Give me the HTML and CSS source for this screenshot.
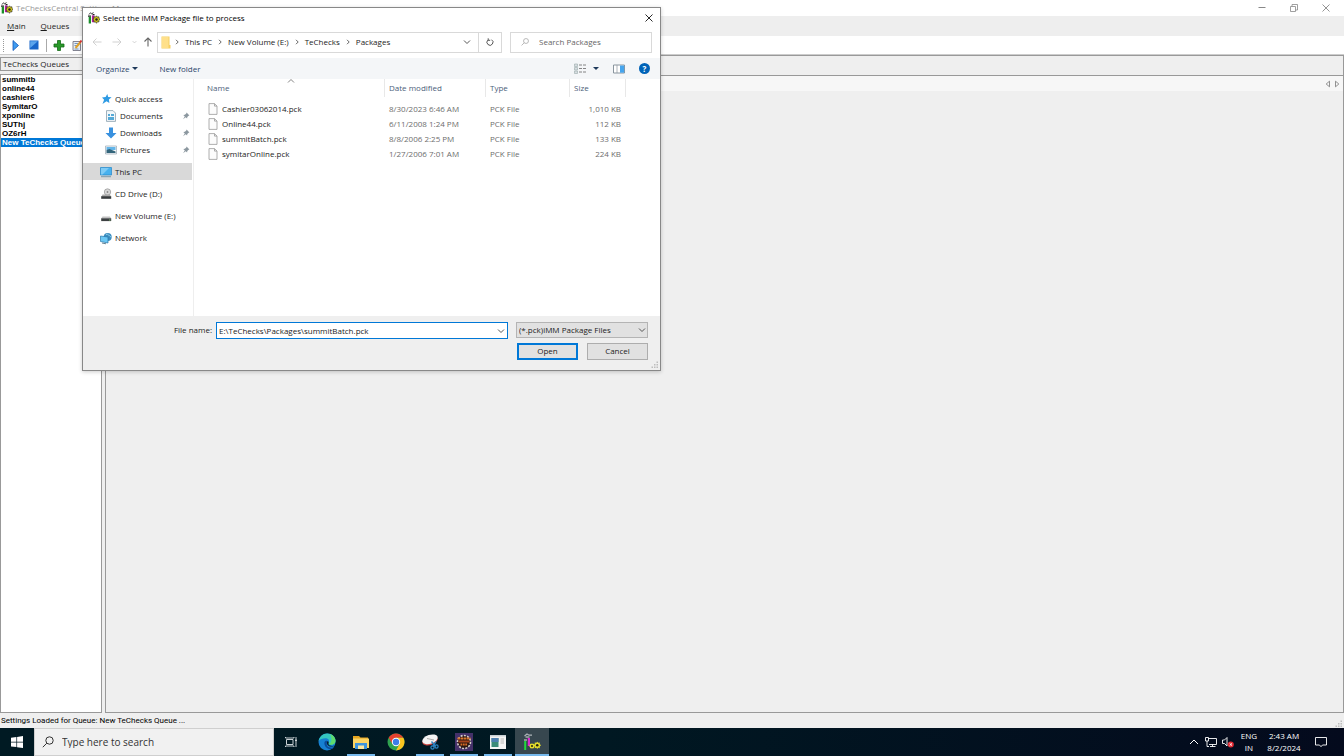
FILE: index.html
```html
<!DOCTYPE html>
<html lang="en">
<head>
<meta charset="utf-8">
<title>TeChecksCentral Settings Manager</title>
<link rel="stylesheet" href="styles.css">
</head>
<body>
<svg class="defs" aria-hidden="true">
  <symbol id="app" viewBox="0 0 12 12">
    <path d="M1 2.500 2.500.8l1.200 1L5.500.6" fill="none" stroke="#333" stroke-width="1"/>
    <path d="M0 3.500h3v1.300H0zM4.500 2h2v1.300h-2z" fill="#222"/>
    <path d="M.7 4.800h2.300v6.700H.7z" fill="#1a8f2a"/>
    <path d="M3.900 3.400h2.500v6.800H3.900z" fill="#b51d9d"/>
    <path d="m8.500 3.800.9 1.300 1.600-.3-.1 1.500 1.100 1-1.100 1 .1 1.600-1.600-.1-.9 1.500-1-1.400-1.700.2.200-1.700-1.200-1.100 1.200-1-.2-1.600 1.700.3z" fill="#cfc318" stroke="#222" stroke-width=".6"/>
    <circle cx="8.500" cy="7.500" r="1.200" fill="#222"/>
  </symbol>
  <symbol id="gear" viewBox="0 0 6 6"><path d="m3 0 .7 1 1.300-.3v1.300l1 1-1 1v1.300L3.700 5 3 6l-.7-1-1.300.3V4L0 3l1-1V.7l1.300.3z" fill="#e4dc2a"/><circle cx="3" cy="3" r="1" fill="#24240f"/></symbol>
  <symbol id="file" viewBox="0 0 10 12"><path d="M1 .6h5.500l2.500 2.500v8.300H1z" fill="#fcfcfc" stroke="#9a9a9a" stroke-width=".8"/><path d="M6.500.6v2.500H9" fill="none" stroke="#9a9a9a" stroke-width=".8"/></symbol>
  <symbol id="pin" viewBox="0 0 8 8"><path d="M4.600.6 7.400 3.400l-.8.3-1.300 1.400-.2 1.500L3.700 5.300 1 7.200l1.800-2.800L1.300 3l1.600-.2L4.300 1.400z" fill="#8b979f"/></symbol>
  <symbol id="chev" viewBox="0 0 8 8"><path d="m1 2.500 3 3 3-3" fill="none" stroke="currentColor" stroke-width="1"/></symbol>
  <symbol id="sep" viewBox="0 0 6 8"><path d="m2 1.800 2.200 2.200L2 6.200" fill="none" stroke="#555" stroke-width=".9"/></symbol>
  <symbol id="lens" viewBox="0 0 12 12"><circle cx="7.500" cy="4.500" r="3.700" fill="none" stroke="currentColor"/><path d="M4.800 7.200.8 11.200" stroke="currentColor"/></symbol>
  <symbol id="grip" viewBox="0 0 8 8"><path d="M5.500.5h1.500V2H5.500zM3 3h1.500v1.500H3zM5.500 3H7v1.500H5.500zM.5 5.500H2V7H.5zM3 5.500h1.500V7H3zM5.500 5.500H7V7H5.500z" fill="#bdbdbd"/></symbol>
</svg>

<div class="desktop">
  <header class="titlebar">
    <svg class="i12"><use href="#app"/></svg>
    <span class="titlebar-text">TeChecksCentral Settings Manager</span>
    <div class="window-controls">
      <button aria-label="Minimize"><svg viewBox="0 0 8 8"><path d="M.5 3.500h7" stroke="#888" fill="none"/></svg></button>
      <button aria-label="Restore"><svg viewBox="0 0 8 8"><path d="M.5 2.500h5v5h-5zM2 2.500V.5h5.500V6h-2" stroke="#888" stroke-width=".8" fill="none"/></svg></button>
      <button aria-label="Close"><svg viewBox="0 0 8 8"><path d="m.5.5 7 7m0-7-7 7" stroke="#888" stroke-width=".9" fill="none"/></svg></button>
    </div>
  </header>
  <nav class="menubar">
    <button><u>M</u>ain</button>
    <button><u>Q</u>ueues</button>
  </nav>
  <div class="toolbar">
    <span class="handle"></span>
    <button aria-label="Start"><svg viewBox="0 0 12 12"><path d="M3 1.500 8.500 6.500 3 11.500z" fill="#3f9cf0" stroke="#1557b8" stroke-width=".8"/></svg></button>
    <button aria-label="Stop"><svg viewBox="0 0 12 12"><path d="M1.500 1.500h9v9h-9z" fill="#1765c9"/><path d="M2.200 2.200h7.600L2.200 9z" fill="#5aa4ec"/></svg></button>
    <span class="divider"></span>
    <button aria-label="Add"><svg viewBox="0 0 12 12"><path d="M4.500 1.500h3v3.500H11v3H7.500v3.500h-3V8H1V5h3.500z" fill="#2a9a2a" stroke="#156a18" stroke-width=".8"/></svg></button>
    <button aria-label="Edit"><svg viewBox="0 0 12 12"><path d="M2 2.500h7.500v9H2z" fill="#e8eef5" stroke="#667" stroke-width=".8"/><path d="M3.500 4.500h4M3.500 6.500h3M3.500 10h4" stroke="#557fb5" stroke-width=".8"/><path d="m4.500 9 5-6" stroke="#dfa22b" stroke-width="2"/><path d="m9 3.500 1.500-2" stroke="#d33" stroke-width="2"/></svg></button>
  </div>
  <main class="workspace">
    <section class="queues">
      <h2 class="queues-title">TeChecks Queues</h2>
      <ul class="queue-list">
        <li>summitb</li><li>online44</li><li>cashier6</li><li>SymitarO</li><li>xponline</li><li>SUThj</li><li>OZ6rH</li>
        <li class="selected">New TeChecks Queue</li>
      </ul>
    </section>
    <section class="settings">
      <div class="settings-head"></div>
      <div class="settings-pane">
        <div class="tabstrip">
          <button aria-label="Previous tab"><svg viewBox="0 0 6 8"><path d="M4.500 1.200v5.600L1.200 4z" fill="none" stroke="#777" stroke-width=".8"/></svg></button>
          <button aria-label="Next tab"><svg viewBox="0 0 6 8"><path d="M1.500 1.200v5.600L4.800 4z" fill="none" stroke="#777" stroke-width=".8"/></svg></button>
        </div>
      </div>
    </section>
  </main>
  <footer class="statusbar"><span>Settings Loaded for Queue: New TeChecks Queue ...</span><svg class="grip"><use href="#grip"/></svg></footer>

  <div class="taskbar">
    <button class="start" aria-label="Start menu"><svg viewBox="0 0 12 12"><path d="M0 1.700 5.400 1v4.700H0zM6.100.9 12 0v5.700H6.100zM0 6.400h5.400v4.700L0 10.400zM6.100 6.400H12V12l-5.900-.8z" fill="#fff"/></svg></button>
    <label class="task-search"><svg class="i12"><use href="#lens"/></svg><input type="text" placeholder="Type here to search" aria-label="Type here to search"></label>
    <button class="task taskview" aria-label="Task View"><svg class="i12" viewBox="0 0 12 12"><path d="M1.500 3.500h6.500v5H1.500zM.5 1v1h8.500V1M.5 11v-1h8.500v1M11 1v2.500M11 6v5" fill="none" stroke="#dfe5e8" stroke-width=".9"/><path d="M10.200 3.500h1.600v2h-1.600z" fill="#fff"/></svg></button>
    <button class="task" aria-label="Edge"><svg viewBox="0 0 18 18"><circle cx="9" cy="9" r="8.500" fill="#1680d2"/><path d="M.6 8C1.500 3.500 5 .5 9.300.5c5 0 8.200 3.600 8.200 7.200 0 2.600-2 4-4.200 4-2.300 0-3.300-.9-2.800-1.700C12 7.500 10.500 5.200 7.500 5.200 4.500 5.200 2 6 .6 8z" fill="#35c6c0"/><path d="M12 1c3.600 1.500 5.500 4 5.500 6.700 0 2.600-2 4-4.200 4-1 0-2-.2-2.500-.7 3-1 3.700-5.500 1.200-10z" fill="#5fdc6c"/><path d="M6.500 9c-.8 4 2.500 7.500 6.800 7 1.200-.2 2.200-.9 3-1.700-5 1.300-8.300-.8-7.500-4.300.2-1 1-1.500 1-1.500S8 6.500 6.500 9z" fill="#0b4c9c"/><path d="M9.200 8.800c-.8 1.700 0 4 2.600 4.600 2 .5 4-.1 5-.9-1 .5-2.500.6-3.800.3-2-.4-3-1.700-2.400-2.900.3-.7-.6-2.300-1.400-1.100z" fill="#06202b"/></svg></button>
    <button class="task open" aria-label="File Explorer"><svg viewBox="0 0 18 18"><path d="M1 3h6l1.500 1.500H16V15H1z" fill="#e5a520"/><path d="M1 5.500h16V15H1z" fill="#fbd464"/><path d="M3 10h12v6H3z" fill="#3e93dc"/><path d="M6 12.500h6V16H6z" fill="#fbe6a0"/></svg></button>
    <button class="task chrome" aria-label="Chrome"><svg viewBox="0 0 18 18"><circle cx="9" cy="9" r="8.500" fill="#2fa24f"/><path d="M1.640 4.750A8.500 8.500 0 0 1 16.360 4.750H9L5.400 11z" fill="#e5402f"/><path d="M16.360 4.750A8.500 8.500 0 0 1 9 17.500L12.600 11 9 4.750z" fill="#fbc41f"/><circle cx="9" cy="9" r="4.200" fill="#fff"/><circle cx="9" cy="9" r="3.200" fill="#3b7de8"/></svg></button>
    <button class="task open" aria-label="Snipping Tool"><svg viewBox="0 0 18 18"><ellipse cx="9" cy="7.500" rx="8" ry="4.600" transform="rotate(-18 9 7.500)" fill="#c8413c"/><ellipse cx="9" cy="6.300" rx="8" ry="4.400" transform="rotate(-18 9 6.300)" fill="#f3f3f3"/><path d="m6 5.500 7 1.500" stroke="#aaa" stroke-width="1"/><path d="m10.500 8.500 4 5m.5-5-3 5" stroke="#2d86c6" stroke-width="1.400"/><circle cx="11.500" cy="14.500" r="1.600" fill="none" stroke="#2d86c6" stroke-width="1.200"/><circle cx="15.500" cy="13.500" r="1.600" fill="none" stroke="#2d86c6" stroke-width="1.200"/></svg></button>
    <button class="task open" aria-label="Java IDE"><svg viewBox="0 0 18 18"><path d="M0 0h18v18H0z" fill="#44316a"/><circle cx="9" cy="9" r="6.500" fill="#2a1712" stroke="#d5cfca" stroke-width="1.600" stroke-dasharray="2 1.300"/><path d="M2.500 5.500h13" stroke="#d9772d" stroke-width="2.200" stroke-dasharray="2.500 .5"/><path d="M3.500 8.500h11" stroke="#a8441b" stroke-width="2"/><path d="M5.500 11.500h7" stroke="#d96d25" stroke-width="2" stroke-dasharray="1.800 .6"/></svg></button>
    <button class="task open" aria-label="Window"><svg viewBox="0 0 18 18"><path d="M1 2h16v14H1z" fill="#f4f4f4"/><path d="M1 2h16v1.500H1z" fill="#c8d0d5"/><path d="M2.500 5h7v9h-7z" fill="#3b8b78"/><path d="M2.500 5h7v4h-7z" fill="#4c7fb0"/><path d="M11.500 6H15M11.500 8H15M11.500 10H15" stroke="#aaa" stroke-width=".8"/></svg></button>
    <button class="task open active" aria-label="TeChecks"><svg viewBox="0 0 18 18"><path d="M1.500 3 4 1l2 1.200h3" stroke="#aeb6ba" stroke-width="1.200" fill="none"/><path d="M2.500 4h4M1 7h3" stroke="#ddd" stroke-width="1"/><path d="M1.200 8h2v9h-2z" fill="#20d93c"/><path d="M4.800 5h2.200v8H4.800z" fill="#dc27cf"/><use href="#gear" x="6" y="10" width="6" height="6"/><use href="#gear" x="10.500" y="8.500" width="7.500" height="7.500"/></svg></button>
    <div class="tray">
      <button aria-label="Show hidden icons"><svg class="i12" viewBox="0 0 12 12"><path d="m2 8 4-4 4 4" fill="none" stroke="#fff"/></svg></button>
      <button aria-label="Network"><svg class="i12" viewBox="0 0 12 12"><path d="M3 2.500h8.500V8.500H4M7.500 8.500v2M5 10.500h5.500M2 5v5.500h2M.5 1.500h3v3.500h-3z" fill="none" stroke="#fff" stroke-width=".9"/></svg></button>
      <button aria-label="Volume muted"><svg class="i12" viewBox="0 0 12 12"><path d="M.5 4h2L5 1.500v8.500L2.500 7.500h-2z" fill="none" stroke="#fff" stroke-width=".9"/><circle cx="8.800" cy="8.500" r="3" fill="#e32b35"/><path d="m7.600 7.300 2.400 2.400m0-2.400L7.600 9.700" stroke="#fff" stroke-width=".9"/></svg></button>
      <button class="lang"><span>ENG</span><span>IN</span></button>
      <button class="clock"><span>2:43 AM</span><span>8/2/2024</span></button>
      <button class="notice" aria-label="Notifications"><svg class="i12" viewBox="0 0 12 12"><path d="M.5 1.500h11v7.500H7.500L6 10.700 4.500 9h-4z" fill="none" stroke="#fff" stroke-width=".9"/></svg></button>
    </div>
  </div>

  <div class="dialog" role="dialog" aria-labelledby="dialog-title">
    <div class="dialog-title">
      <svg class="i12"><use href="#app"/></svg>
      <span id="dialog-title">Select the iMM Package file to process</span>
      <button aria-label="Close dialog"><svg viewBox="0 0 8 8"><path d="m.5.5 7 7m0-7-7 7" stroke="#111" stroke-width=".9"/></svg></button>
    </div>
    <div class="address-row">
      <div class="arrows">
        <button aria-label="Back"><svg viewBox="0 0 10 10"><path d="M9.500 5H1m3.500-3.500L1 5l3.500 3.500" fill="none" stroke="#ccc" stroke-width=".9"/></svg></button>
        <button aria-label="Forward"><svg viewBox="0 0 10 10"><path d="M.5 5H9M5.500 1.500 9 5 5.500 8.500" fill="none" stroke="#ccc" stroke-width=".9"/></svg></button>
        <button class="small light" aria-label="Recent"><svg><use href="#chev"/></svg></button>
        <button aria-label="Up"><svg viewBox="0 0 10 10"><path d="M5 9.500V1.200M1.500 4.500 5 1l3.500 3.500" fill="none" stroke="#666" stroke-width="1.100"/></svg></button>
      </div>
      <div class="address">
        <svg class="folder" viewBox="0 0 10 13"><path d="M.5.5h8V9h1v3.500h-9z" fill="#f6cf62"/><path d="M1 1h6.500v11H1z" fill="#ffe08a"/></svg>
        <svg class="sep"><use href="#sep"/></svg><button>This PC</button>
        <svg class="sep"><use href="#sep"/></svg><button>New Volume (E:)</button>
        <svg class="sep"><use href="#sep"/></svg><button>TeChecks</button>
        <svg class="sep"><use href="#sep"/></svg><button>Packages</button>
        <button class="history" aria-label="Previous locations"><svg><use href="#chev"/></svg></button>
        <button class="refresh" aria-label="Refresh"><svg viewBox="0 0 8 8"><path d="M5.500 1.700A3 3 0 1 1 2 2M2.200 .3V2.300H4.200" fill="none" stroke="#444" stroke-width=".9"/></svg></button>
      </div>
      <label class="search"><svg><use href="#lens"/></svg><input type="text" placeholder="Search Packages" aria-label="Search Packages"></label>
    </div>
    <div class="commands">
      <button class="organize">Organize <i class="caret"></i></button>
      <button>New folder</button>
      <div class="view-tools">
        <button aria-label="Change view"><svg class="i12" viewBox="0 0 12 12"><path d="M.5 1h3v2.500h-3zM.5 4.500h3V7h-3zM.5 8h3v2.500h-3z" fill="#d7dde2" stroke="#9aa" stroke-width=".6"/><path d="M5 2h3m1 0h3M5 5.500h3m1 0h3M5 9h3m1 0h3" stroke="#777" stroke-width=".9"/></svg><i class="caret"></i></button>
        <button aria-label="Preview pane"><svg class="i12" viewBox="0 0 12 12"><path d="M.5 2h11v8H.5z" fill="#fff" stroke="#7d8a94" stroke-width=".9"/><path d="M7 2.500h4.200v7.200H7z" fill="#45a5ee"/><path d="M4 2v8" stroke="#8a949c" stroke-width=".7"/></svg></button>
        <button class="help" aria-label="Help">?</button>
      </div>
    </div>
    <div class="browser">
      <nav class="places">
        <a href="#" class="group"><svg class="i12" viewBox="0 0 12 12"><path d="m7.300 1 .9 3 3.400.3-2.700 2.200.5 3.400-2.900-1.600-4 2.700 1.600-4.200L2 4.600l3.600-.5z" fill="#2e9be4"/></svg>Quick access</a>
        <a href="#" class="sub"><svg class="i12" viewBox="0 0 12 12"><path d="M1.500.6H8l2.500 2.500v8.300h-9z" fill="#f2f7fa" stroke="#8aa0ad" stroke-width=".8"/><path d="M3 4h2v2H3zM6 4h3v2H6zM3 7h6v3H3z" fill="#55a9d6"/></svg>Documents<svg class="pin"><use href="#pin"/></svg></a>
        <a href="#" class="sub"><svg class="i12" viewBox="0 0 12 12"><path d="M4 .6h4V6h3.500L6 11.500.5 6H4z" fill="#3891df"/></svg>Downloads<svg class="pin"><use href="#pin"/></svg></a>
        <a href="#" class="sub"><svg class="i12" viewBox="0 0 12 12"><path d="M.5 2h11v8H.5z" fill="#f5f8fa" stroke="#9aa8b1" stroke-width=".7"/><path d="M1.500 3h9v3h-9z" fill="#63b5e9"/><path d="M1.500 9V6l3-1 6 2.500V9z" fill="#33657b"/></svg>Pictures<svg class="pin"><use href="#pin"/></svg></a>
        <a href="#" class="place current"><svg class="i12" viewBox="0 0 12 12"><path d="M.5 1.500h11v7.500H.5z" fill="#48b1ee" stroke="#2387c9" stroke-width=".7"/><path d="M1 2h8L2.500 8.600H1z" fill="#7fcbf5"/><path d="M1 10.700h10" stroke="#7d98a8"/></svg>This PC</a>
        <a href="#" class="place"><svg class="i12" viewBox="0 0 12 12"><circle cx="7.500" cy="4" r="3.200" fill="#d8d8d8" stroke="#929292" stroke-width=".7"/><circle cx="7.500" cy="4" r=".9" fill="#888"/><path d="m2.500 6.500-1 2h9.500l-1-2z" fill="#aaa"/><path d="M1.200 8.200h10v2.600h-10z" fill="#373b3d"/></svg>CD Drive (D:)</a>
        <a href="#" class="place"><svg class="i12" viewBox="0 0 12 12"><path d="m2.500 6.500-1.300 2h10l-1.300-2z" fill="#c1c1c1"/><path d="M1.200 8.300h10v2.800h-10z" fill="#3c4042"/><path d="M9 10h1.500" stroke="#8bdc78" stroke-width=".8"/></svg>New Volume (E:)</a>
        <a href="#" class="place"><svg class="i12" viewBox="0 0 12 12"><circle cx="7.700" cy="5" r="4" fill="#3c8ec0"/><path d="M6 2.500C8.500 1.500 9 4 11 5" stroke="#8ccbe8" fill="none"/><path d="m.5 4 7.500 1v6l-7.500-1.500z" fill="#6cc8f4" stroke="#2677aa" stroke-width=".7"/><path d="m2 11 4 .8" stroke="#648394"/></svg>Network</a>
      </nav>
      <div class="files">
        <table>
          <colgroup><col class="c-name"><col class="c-date"><col class="c-type"><col class="c-size"></colgroup>
          <thead><tr><th class="sorted">Name<svg viewBox="0 0 8 8"><path d="m1 5.500 3-3 3 3" fill="none" stroke="#777" stroke-width=".9"/></svg></th><th>Date modified</th><th>Type</th><th>Size</th></tr></thead>
          <tbody>
            <tr><td><svg><use href="#file"/></svg>Cashier03062014.pck</td><td>8/30/2023 6:46 AM</td><td>PCK File</td><td>1,010 KB</td></tr>
            <tr><td><svg><use href="#file"/></svg>Online44.pck</td><td>6/11/2008 1:24 PM</td><td>PCK File</td><td>112 KB</td></tr>
            <tr><td><svg><use href="#file"/></svg>summitBatch.pck</td><td>8/8/2006 2:25 PM</td><td>PCK File</td><td>133 KB</td></tr>
            <tr><td><svg><use href="#file"/></svg>symitarOnline.pck</td><td>1/27/2006 7:01 AM</td><td>PCK File</td><td>224 KB</td></tr>
          </tbody>
        </table>
      </div>
    </div>
    <div class="dialog-foot">
      <label class="name-label" for="filename">File name:</label>
      <div class="name-box"><input id="filename" type="text" value="E:\TeChecks\Packages\summitBatch.pck" autofocus><svg><use href="#chev"/></svg></div>
      <div class="type-box"><select aria-label="File type"><option>(*.pck)iMM Package Files</option></select><svg><use href="#chev"/></svg></div>
      <div class="actions"><button class="primary">Open</button><button>Cancel</button></div>
      <svg class="grip"><use href="#grip"/></svg>
    </div>
  </div>
</div>
</body>
</html>
```
FILE: styles.css
```css
* { box-sizing: border-box; }
body { margin: 0; font: 8px/12px "Open Sans", "Noto Sans", sans-serif; color: #1c1c1c; background: #efefef; }
button, input, select { font: inherit; color: inherit; border: 0; padding: 0; margin: 0; background: none; outline: 0; }
button { display: flex; align-items: center; justify-content: center; white-space: nowrap; }
a { color: inherit; text-decoration: none; }
svg { display: block; flex: none; overflow: visible; width: 8px; height: 8px; }
.defs { position: absolute; width: 0; height: 0; }
.i12 { width: 12px; height: 12px; }

.desktop { position: relative; display: flex; flex-direction: column; height: 100vh; overflow: hidden; }
.titlebar { display: flex; align-items: center; gap: 3px; height: 16px; padding: 0 2px 0 1px; background: #fff; color: #999; }
.titlebar-text { flex: 1; }
.window-controls { display: flex; }
.window-controls button { width: 32px; height: 14px; }
.menubar { display: flex; gap: 15px; height: 20px; padding-left: 7px; background: #eee; }
.toolbar { display: flex; align-items: center; gap: 6px; height: 19px; padding-left: 3px; background: #fff; border-bottom: 1px solid #ccc; }
.toolbar svg { width: 12px; height: 12px; }
.handle { height: 13px; border-left: 1px dotted #999; }
.divider { height: 13px; border-left: 1px solid #aaa; }

.workspace { flex: 1; display: flex; gap: 3px; min-height: 0; }
.queues { width: 102px; display: flex; flex-direction: column; }
.queues-title { height: 14px; margin: 2px 0 3px; padding-left: 2px; border: 1px solid #999; font: inherit; line-height: 12px; }
.queue-list { flex: 1; margin: 0; padding: 0; list-style: none; background: #fff; border: 1px solid #999; font: bold 8px/9px "Liberation Sans", Arial, sans-serif; color: #000; overflow: hidden; white-space: nowrap; }
.queue-list li { padding-left: 1px; }
.queue-list .selected { background: #0078d7; color: #fff; }
.settings { flex: 1; display: flex; flex-direction: column; }
.settings-head { height: 20px; border: 1px solid #999; border-bottom: 0; }
.settings-pane { flex: 1; border: 1px solid #999; }
.tabstrip { display: flex; justify-content: flex-end; align-items: center; gap: 3px; height: 15px; padding-right: 3px; background: #f7f7f7; }
.tabstrip svg { width: 6px; }
.statusbar { display: flex; justify-content: space-between; align-items: center; height: 15px; padding: 0 1px; font-family: Roboto, "Liberation Sans", sans-serif; color: #000; }
.grip { align-self: flex-end; }

.taskbar { display: flex; height: 28px; background: linear-gradient(90deg, #001a23, #001822 45%, #040a1d); color: #fff; }
.start { width: 34px; }
.start svg { width: 12px; height: 12px; }
.task-search { display: flex; align-items: center; gap: 8px; width: 240px; padding: 0 7px; background: #f1f1f1; border: 1px solid #cfcfcf; color: #333; font-size: 10px; }
.task-search input { flex: 1; min-width: 0; }
input::placeholder { color: inherit; opacity: 1; }
.task { width: 34px; }
.task svg { width: 18px; height: 18px; }
.task svg.i12 { width: 12px; height: 12px; }
.taskview { width: 36px; padding-right: 2px; }
.chrome { width: 35px; }
.open { background: linear-gradient(#76b9ed, #76b9ed) center bottom / 28px 2px no-repeat; }
.active { background: linear-gradient(#76b9ed, #76b9ed) center bottom / 34px 2px no-repeat, #37474f; }
.tray { display: flex; margin-left: auto; align-items: stretch; }
.tray > button { width: 17px; }
.tray .lang, .tray .clock { flex-direction: column; line-height: 12px; padding-bottom: 1px; }
.tray .lang { width: 26px; }
.tray .clock { width: 44px; }
.tray .notice { width: 30px; margin-right: 8px; }

.dialog { position: absolute; left: 82px; top: 7px; width: 579px; background: #fff; border: 1px solid #888; box-shadow: 0 1px 4px rgba(0,0,0,.2); }
.dialog-title { display: flex; align-items: center; gap: 3px; height: 19px; padding: 0 7px 0 5px; color: #000; }
.dialog-title button { margin-left: auto; }
.address-row { display: flex; align-items: center; height: 31px; padding: 0 8px 1px 9px; }
.arrows { display: flex; align-items: center; gap: 10px; width: 65px; }
.arrows svg { width: 10px; height: 10px; }
.arrows .small { margin-right: -4px; }
.arrows .small svg { width: 5px; height: 6px; }
.arrows .light { color: #bbb; }
.address { flex: 1; display: flex; align-items: center; gap: 5px; height: 21px; padding-left: 3px; border: 1px solid #d9d9d9; }
.folder { width: 10px; height: 13px; margin-right: -2px; }
.sep { width: 6px; }
.history { margin-left: auto; width: 12px; color: #555; }
.refresh { align-self: stretch; width: 23px; border-left: 1px solid #d9d9d9; }
.search { display: flex; align-items: center; gap: 10px; width: 142px; height: 21px; margin-left: 8px; padding: 0 10px; border: 1px solid #d9d9d9; color: #666; }
.search svg { color: #999; }
.search input { flex: 1; min-width: 0; }
.commands { display: flex; align-items: center; gap: 21px; height: 21px; padding: 0 10px 0 13px; background: #f4f6f8; color: #2b4568; }
.caret { margin-left: 3px; border: 3px solid transparent; border-top-color: #1e395b; border-bottom: 0; }
.view-tools { display: flex; align-items: center; gap: 14px; margin-left: auto; }
.view-tools .caret { margin-left: 7px; }
.help { width: 11px; height: 11px; border-radius: 50%; background: #0063b8; color: #fff; font-weight: bold; }
.browser { display: flex; height: 237px; }
.places { width: 111px; padding-top: 11px; border-right: 1px solid #eee; }
.places a { display: flex; align-items: center; gap: 3px; height: 17px; padding-left: 17px; margin-right: 1px; }
.places .sub { padding-left: 22px; gap: 3px; }
.places .place { margin-bottom: 5px; }
.places .current { margin-top: 5px; background: #d9d9d9; }
.places .pin { margin: 0 2px 0 auto; }
.files { flex: 1; padding-left: 11px; }
table { border-collapse: separate; border-spacing: 0; table-layout: fixed; width: 421px; }
.c-name { width: 180px; } .c-date { width: 101px; } .c-type { width: 84px; } .c-size { width: 56px; }
th, td { padding: 0 4px; text-align: left; font-weight: normal; white-space: nowrap; }
th { height: 18px; color: #4c607a; border-right: 1px solid #e8e8e8; }
.sorted { position: relative; padding-left: 2px; }
.sorted svg { position: absolute; top: -2px; left: 46%; }
tbody::before { content: ""; display: block; height: 4px; }
td { height: 15px; color: #6d6d6d; }
td:first-child { display: flex; align-items: center; gap: 4px; color: #1c1c1c; padding-left: 3px; }
td svg { width: 10px; height: 12px; }
td:last-child { text-align: right; padding-right: 5px; }
.dialog-foot { position: relative; display: grid; grid-template-columns: 129px 1fr 132px; gap: 4px; padding: 6px 12px 10px 0; background: #efefef; }
.dialog-foot .grip { position: absolute; right: 1px; bottom: 1px; }
.name-label { text-align: right; line-height: 16px; }
.name-box, .type-box { position: relative; height: 17px; }
.name-box { margin-right: 4px; border: 1px solid #0078d7; background: #fff; }
.name-box input { display: block; width: 100%; height: 15px; padding: 0 16px 0 2px; }
.name-box svg, .type-box svg { position: absolute; right: 2px; top: 4px; color: #555; pointer-events: none; }
.type-box select { display: block; width: 100%; height: 16px; padding-left: 2px; appearance: none; background: #e1e1e1; border: 1px solid #b4b4b4; border-radius: 0; }
.actions { grid-column: 1 / -1; display: flex; justify-content: flex-end; gap: 9px; }
.actions button { width: 61px; height: 17px; background: #e1e1e1; border: 1px solid #adadad; padding-bottom: 1px; }
.actions .primary { border: 2px solid #0078d7; }
```
